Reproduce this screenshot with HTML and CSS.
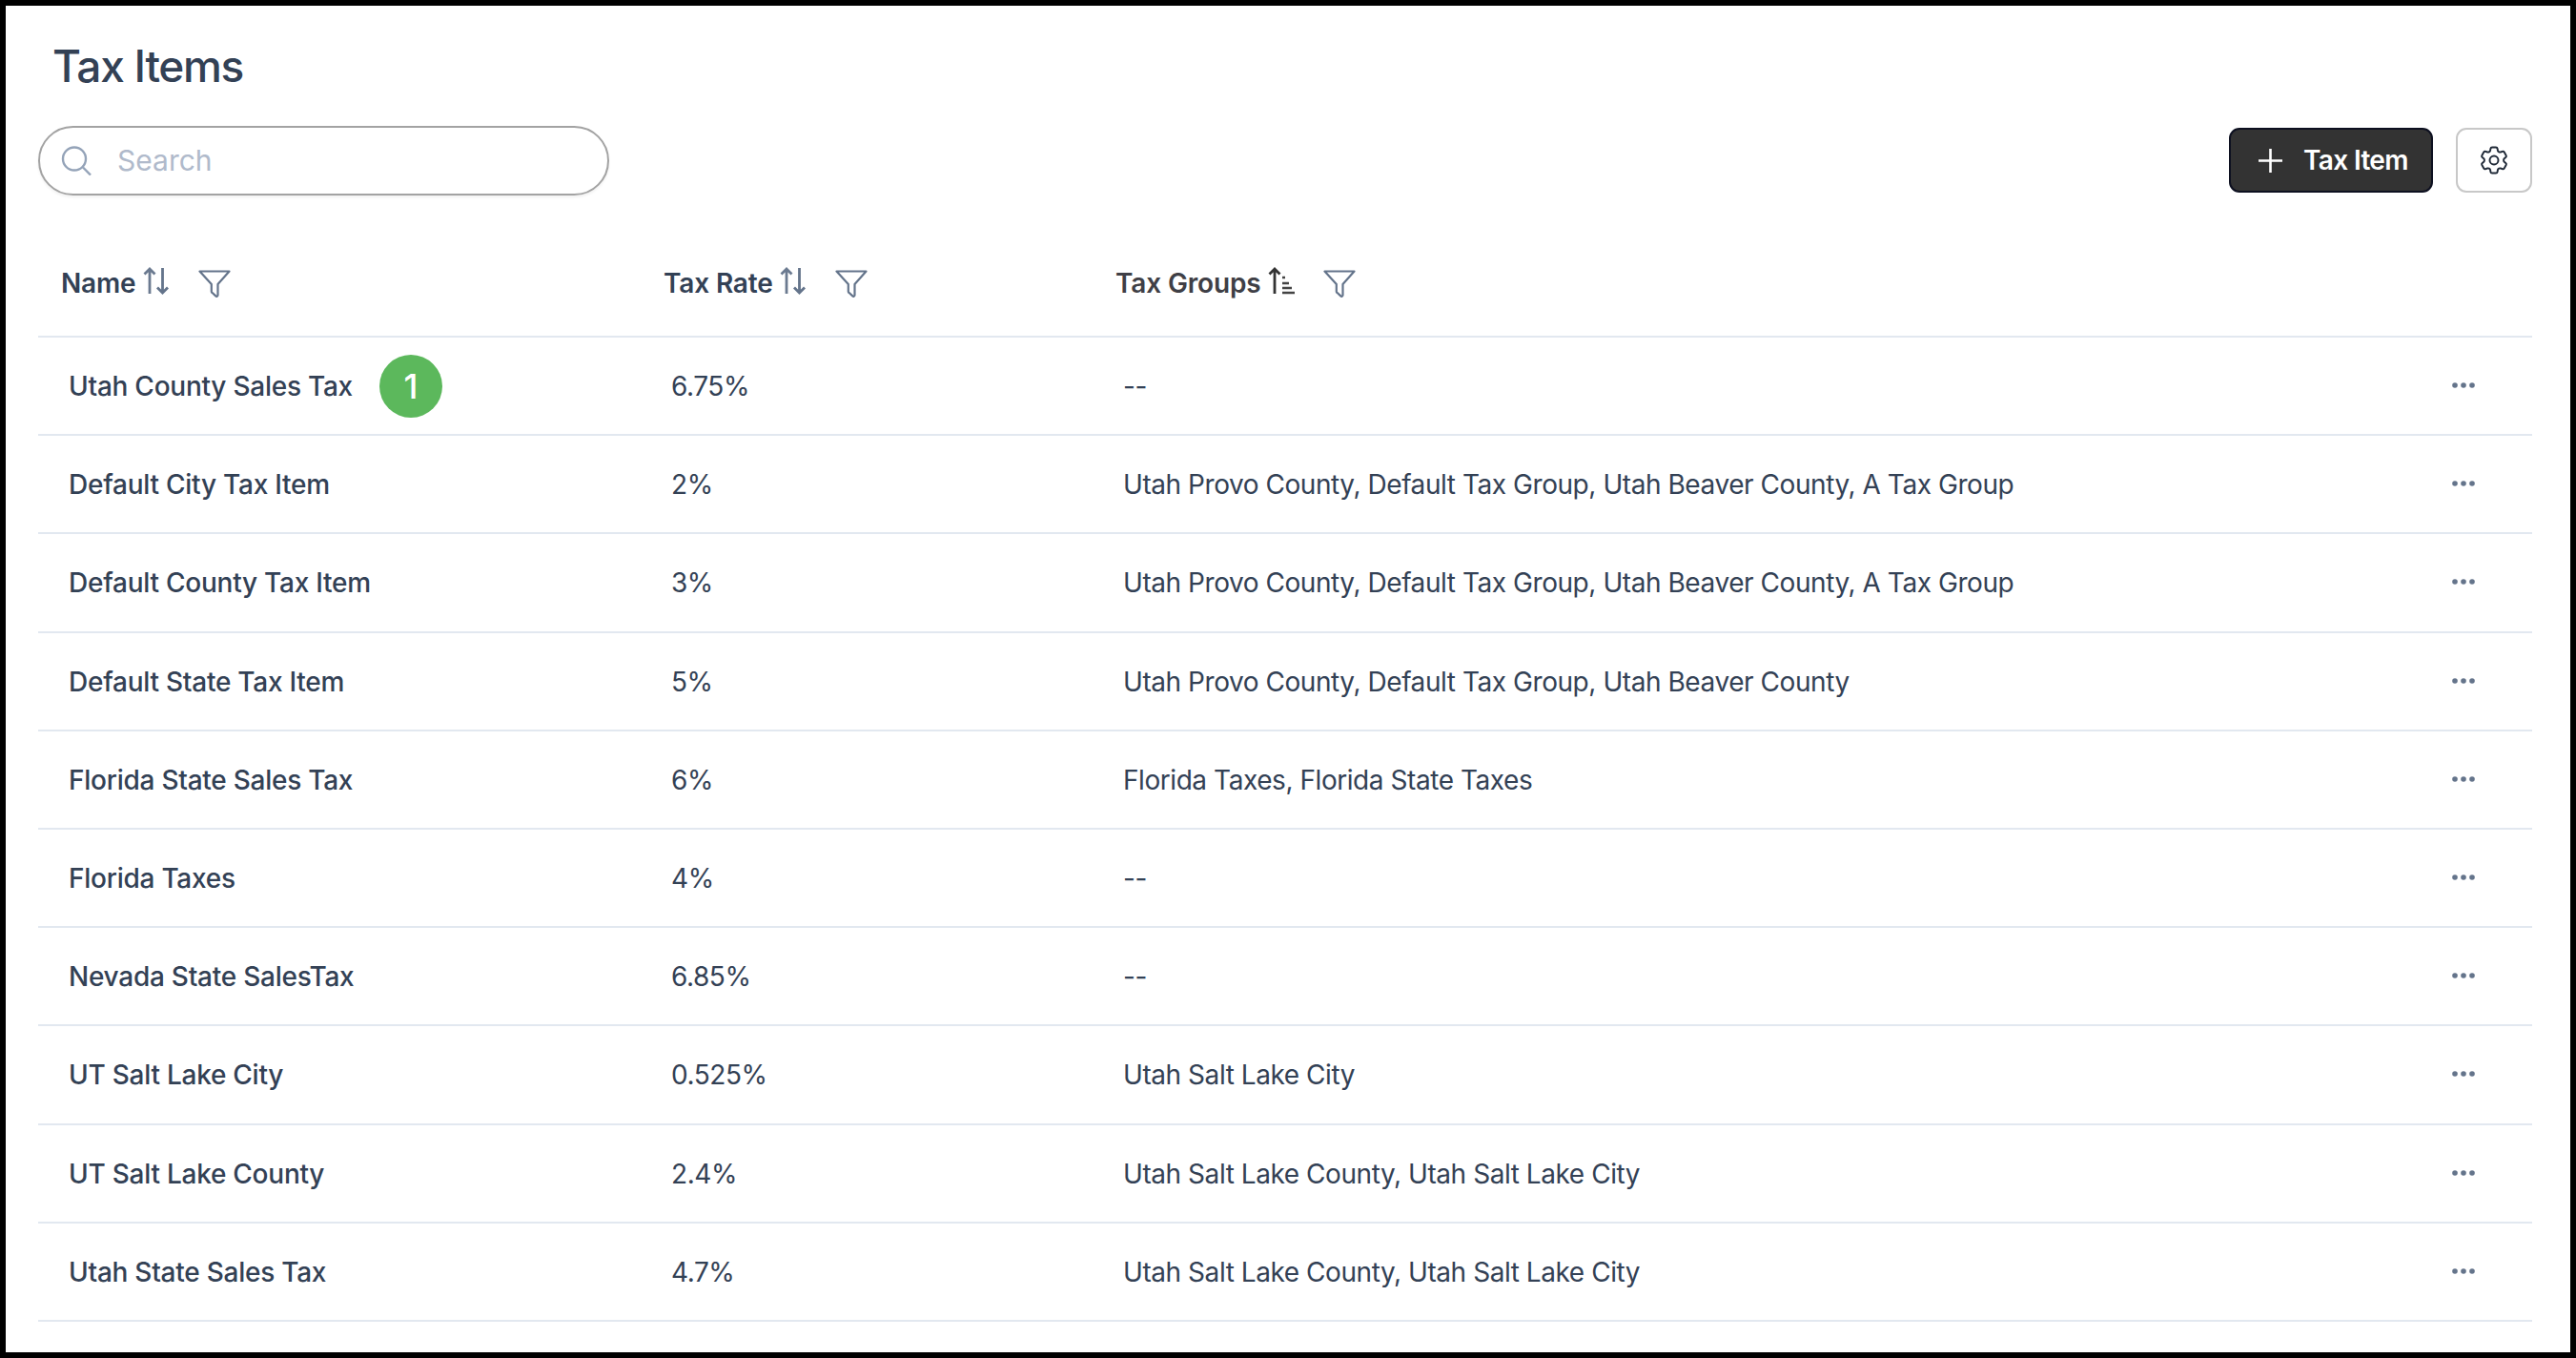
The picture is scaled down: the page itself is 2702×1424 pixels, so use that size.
FILE: index.html
```html
<!DOCTYPE html>
<html lang="en">
<head>
<meta charset="utf-8">
<title>Tax Items</title>
<link rel="stylesheet" href="styles.css">
</head>
<body>
<svg class="defs" width="0" height="0" aria-hidden="true">
  <symbol id="filter" viewBox="0 0 34 29"><path d="M1.5 1.5h31L20.5 15v11.5a1.3 1.3 0 0 1-2.2.9l-3.6-3.4a1.5 1.5 0 0 1-.9-1.4V15z" fill="none" stroke="#64748b" stroke-width="2.2" stroke-linejoin="round"/></symbol>
  <symbol id="sort" viewBox="0 0 28 29"><path d="M7 28V2M1.5 7.5 7 2l5.5 5.5" fill="none" stroke="#6b7a90" stroke-width="2.8"/><path d="M20.500 1v26M15 21.500l5.500 5.500 5.500-5.500" fill="none" stroke="#64748b" stroke-width="2.8"/></symbol>
  <symbol id="sortasc" viewBox="0 0 28 29"><path d="M7 28V2M1.500 7.500 7 2l5.500 5.500" fill="none" stroke="#333" stroke-width="2.8"/><path d="M15 11h3M15 17h7M15 22h10M15 27h13" fill="none" stroke="#444" stroke-width="2.400"/></symbol>
  <symbol id="dots" viewBox="0 0 24 6"><circle cx="3" cy="3" r="2.800"/><circle cx="12" cy="3" r="2.800"/><circle cx="21" cy="3" r="2.800"/></symbol>
</svg>
<main class="frame">
  <h1 class="title">Tax Items</h1>
  <div class="toolbar">
    <label class="search">
      <svg class="search-icon" viewBox="0 0 32 31" aria-hidden="true"><circle cx="14" cy="13.500" r="12" fill="none" stroke="#94a3b8" stroke-width="2.400"/><path d="m23 22.500 8 8" fill="none" stroke="#94a3b8" stroke-width="2.400"/></svg>
      <input class="search-input" type="text" placeholder="Search">
    </label>
    <div class="actions">
      <button class="btn-primary" type="button">
        <svg class="plus" viewBox="0 0 25 25" aria-hidden="true"><path d="M12.500 0v25M0 12.500h25" stroke="#fff" stroke-width="2.600"/></svg>
        <span>Tax Item</span>
      </button>
      <button class="btn-settings" type="button" aria-label="Settings">
        <svg class="gear" viewBox="0 0 24 24" fill="none" stroke="#1f2937" stroke-width="1.300" stroke-linecap="round" stroke-linejoin="round" aria-hidden="true"><path d="M9.594 3.940c.09-.542.56-.94 1.110-.94h2.593c.55 0 1.020.398 1.110.94l.213 1.281c.063.374.313.686.645.870.074.040.147.083.22.127.324.196.72.257 1.075.124l1.217-.456a1.125 1.125 0 0 1 1.370.49l1.296 2.247a1.125 1.125 0 0 1-.26 1.431l-1.003.827c-.293.24-.438.613-.431.992a6.759 6.759 0 0 1 0 .255c-.007.378.138.75.43.99l1.005.828c.424.35.534.954.26 1.430l-1.298 2.247a1.125 1.125 0 0 1-1.369.491l-1.217-.456c-.355-.133-.75-.072-1.076.124a6.570 6.570 0 0 1-.22.128c-.331.183-.581.495-.644.869l-.213 1.280c-.09.543-.56.941-1.110.941h-2.594c-.55 0-1.020-.398-1.110-.94l-.213-1.281c-.062-.374-.312-.686-.644-.87a6.520 6.520 0 0 1-.22-.127c-.325-.196-.72-.257-1.076-.124l-1.217.456a1.125 1.125 0 0 1-1.369-.49l-1.297-2.247a1.125 1.125 0 0 1 .26-1.431l1.004-.827c.292-.24.437-.613.43-.992a6.932 6.932 0 0 1 0-.255c.007-.378-.138-.75-.43-.99l-1.004-.828a1.125 1.125 0 0 1-.26-1.430l1.297-2.247a1.125 1.125 0 0 1 1.370-.491l1.216.456c.356.133.751.072 1.076-.124.072-.044.146-.087.22-.128.332-.183.582-.495.644-.869l.214-1.281z"/><path d="M15 12a3 3 0 1 1-6 0 3 3 0 0 1 6 0z"/></svg>
      </button>
    </div>
  </div>

  <div class="table">
    <div class="head">
      <div class="th"><span>Name</span><svg class="sort-icon"><use href="#sort"/></svg><svg class="filter-icon"><use href="#filter"/></svg></div>
      <div class="th"><span>Tax Rate</span><svg class="sort-icon"><use href="#sort"/></svg><svg class="filter-icon"><use href="#filter"/></svg></div>
      <div class="th th-active"><span>Tax Groups</span><svg class="sort-icon"><use href="#sortasc"/></svg><svg class="filter-icon"><use href="#filter"/></svg></div>
    </div>
    <div class="row">
      <div class="name">Utah County Sales Tax<span class="badge">1</span></div>
      <div>6.75%</div><div>--</div>
      <svg class="more"><use href="#dots"/></svg>
    </div>
    <div class="row">
      <div class="name">Default City Tax Item</div>
      <div>2%</div><div>Utah Provo County, Default Tax Group, Utah Beaver County, A Tax Group</div>
      <svg class="more"><use href="#dots"/></svg>
    </div>
    <div class="row">
      <div class="name">Default County Tax Item</div>
      <div>3%</div><div>Utah Provo County, Default Tax Group, Utah Beaver County, A Tax Group</div>
      <svg class="more"><use href="#dots"/></svg>
    </div>
    <div class="row">
      <div class="name">Default State Tax Item</div>
      <div>5%</div><div>Utah Provo County, Default Tax Group, Utah Beaver County</div>
      <svg class="more"><use href="#dots"/></svg>
    </div>
    <div class="row">
      <div class="name">Florida State Sales Tax</div>
      <div>6%</div><div>Florida Taxes, Florida State Taxes</div>
      <svg class="more"><use href="#dots"/></svg>
    </div>
    <div class="row">
      <div class="name">Florida Taxes</div>
      <div>4%</div><div>--</div>
      <svg class="more"><use href="#dots"/></svg>
    </div>
    <div class="row">
      <div class="name">Nevada State SalesTax</div>
      <div>6.85%</div><div>--</div>
      <svg class="more"><use href="#dots"/></svg>
    </div>
    <div class="row">
      <div class="name">UT Salt Lake City</div>
      <div>0.525%</div><div>Utah Salt Lake City</div>
      <svg class="more"><use href="#dots"/></svg>
    </div>
    <div class="row">
      <div class="name">UT Salt Lake County</div>
      <div>2.4%</div><div>Utah Salt Lake County, Utah Salt Lake City</div>
      <svg class="more"><use href="#dots"/></svg>
    </div>
    <div class="row">
      <div class="name">Utah State Sales Tax</div>
      <div>4.7%</div><div>Utah Salt Lake County, Utah Salt Lake City</div>
      <svg class="more"><use href="#dots"/></svg>
    </div>
  </div>
</main>
</body>
</html>
```
FILE: styles.css
```css
* { box-sizing: border-box; }
html, body { margin: 0; height: 100%; }
body { font-family: Inter, "Liberation Sans", sans-serif; color: #334155; background: #000; overflow: hidden; }
.defs { position: absolute; }

.frame {
  margin: 6px;
  height: 1412px;
  background: #fff;
  padding: 0 40px 0 34px;
  overflow: hidden;
}

.title {
  margin: 0 0 0 15px;
  height: 126px;
  padding-top: 31px;
  font-size: 46px;
  line-height: 64px;
  font-weight: 500;
  letter-spacing: -1.3px;
  color: #334155;
}

.toolbar { display: flex; justify-content: space-between; align-items: center; height: 72px; }

.search {
  display: flex;
  align-items: center;
  gap: 27px;
  width: 599px;
  height: 73px;
  padding-left: 22px;
  border: 2px solid #a3a3a3;
  border-radius: 37px;
  box-shadow: 0 2px 3px rgba(0, 0, 0, .06);
}
.search-icon { width: 32px; height: 31px; flex: none; }
.search-input {
  flex: 1;
  min-width: 0;
  border: 0;
  outline: 0;
  padding: 0;
  background: transparent;
  font: 400 30px Inter, sans-serif;
  color: #334155;
}
.search-input::placeholder { color: #b0bacb; opacity: 1; }

.actions { display: flex; gap: 24px; }
.btn-primary {
  display: flex;
  align-items: center;
  gap: 22px;
  width: 214px;
  height: 68px;
  padding: 0 0 0 29px;
  background: #333;
  border: 2px solid #0d1020;
  border-radius: 11px;
  color: #fff;
  font: 600 28px Inter, sans-serif;
  letter-spacing: -0.65px;
}
.plus { width: 25px; height: 25px; flex: none; }
.btn-settings {
  display: flex;
  align-items: center;
  justify-content: center;
  width: 80px;
  height: 68px;
  padding: 0;
  background: #fff;
  border: 2px solid #c8c8c8;
  border-radius: 11px;
}
.gear { width: 36px; height: 36px; }

.head, .row {
  display: grid;
  align-items: center;
  border-bottom: 2px solid #e2e8f0;
}
.head { height: 150px; padding-top: 38px; grid-template-columns: 632px 474px 1fr; }
.row {
  height: 103.200px;
  padding-top: 1px;
  grid-template-columns: 632px 474px 1fr 124px;
  font-size: 28px;
  font-weight: 400;
  letter-spacing: -0.44px;
}
.row > div { padding-left: 32px; }

.th {
  display: flex;
  align-items: center;
  padding-left: 24px;
  font-size: 28px;
  font-weight: 600;
  letter-spacing: -0.15px;
  color: #334155;
}
.th-active { color: #3f3f46; }
.sort-icon { width: 28px; height: 29px; margin: -6px 0 0 7px; }
.filter-icon { width: 34px; height: 29px; margin: 1px 0 0 30px; }

.row > .name { display: flex; align-items: center; font-weight: 500; letter-spacing: -0.25px; }
.badge {
  display: flex;
  align-items: center;
  justify-content: center;
  width: 66px;
  height: 66px;
  margin-left: 28px;
  border-radius: 50%;
  background: #5cb85c;
  color: #fff;
  font-size: 36px;
  font-weight: 500;
}
.more { width: 24px; height: 6px; fill: #64748b; margin-left: 40px; margin-top: -2px; }
```
